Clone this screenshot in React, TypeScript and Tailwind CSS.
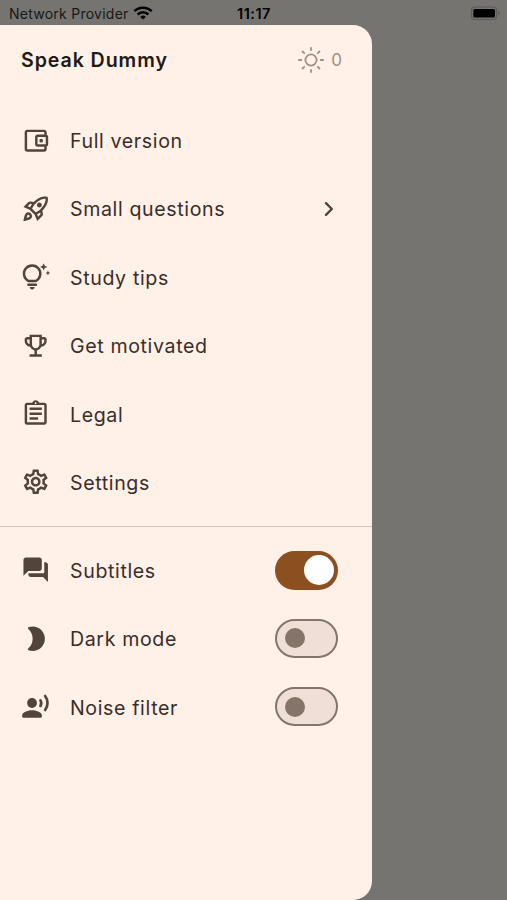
import type { ReactNode } from 'react';
import {
  MdOutlineAssignment,
  MdOutlineEmojiEvents,
  MdOutlineRocketLaunch,
  MdOutlineSettings,
} from 'react-icons/md';

function SunIcon() {
  return (
    <svg viewBox="0 0 28 28" className="w-7 h-7" fill="none" stroke="currentColor" strokeWidth="1.8" strokeLinecap="round">
      <circle cx="14" cy="14" r="5.6" />
      <path d="M14 2v2M14 24v2M1.900 14h2.400M23.700 14h2.400M5.500 5.500l1.700 1.700M20.800 20.800l1.700 1.700M22.500 5.500l-1.700 1.700M7.200 20.800l-1.700 1.700" />
    </svg>
  );
}

function WalletIcon() {
  return (
    <svg viewBox="0 0 24 24" width="1em" height="1em" fill="none" stroke="currentColor" strokeWidth="2" strokeLinejoin="round">
      <path d="M20 7.500V5.200c0-.7-.5-1.200-1.200-1.200H5.200C4.500 4 4 4.500 4 5.200v13.600c0 .7.500 1.200 1.200 1.200h13.600c.7 0 1.200-.5 1.200-1.200v-2.300" />
      <rect x="12.500" y="8" width="8.700" height="8" rx="1.200" />
      <circle cx="16.500" cy="12" r="1.500" fill="currentColor" stroke="none" />
    </svg>
  );
}

function TipsIcon() {
  return (
    <svg viewBox="0 0 24 24" width="1em" height="1em" fill="none" stroke="currentColor" strokeWidth="2" strokeLinecap="round" strokeLinejoin="round">
      <path d="M6 15.500h6.200a6.700 6.700 0 1 0-6.200 0z" />
      <path d="M6 18.500h6.200" />
      <path d="M7.100 20.500h4c0 1.100-.9 2-2 2s-2-.9-2-2z" fill="currentColor" stroke="none" />
      <path d="m18.500 1 .9 2.100 2.100.9-2.100.9-.9 2.100-.9-2.100-2.100-.9 2.100-.9zM22 7l.6 1.300 1.300.6-1.300.6-.6 1.300-.6-1.300-1.300-.6 1.300-.6z" fill="currentColor" stroke="none" />
    </svg>
  );
}

function ForumIcon() {
  return (
    <svg viewBox="0 0 24 24" width="1em" height="1em" fill="currentColor">
      <path d="M20 6h-1v8c0 .6-.4 1-1 1H6v1c0 1.100.9 2 2 2h10l4 4V8c0-1.100-.9-2-2-2zM17 11V4c0-1.100-.9-2-2-2H4c-1.100 0-2 .9-2 2v13l4-4h9c1.100 0 2-.9 2-2z" />
    </svg>
  );
}

function MoonIcon() {
  return (
    <svg viewBox="0 0 24 24" width="1em" height="1em" fill="currentColor">
      <path d="M9.500 2c-1.200 0-2.300.2-3.300.6-.7.300-.8 1-.2 1.500C8.200 6 9.500 8.800 9.500 12S8.200 18 6 19.900c-.6.5-.5 1.200.2 1.500 1 .4 2.100.6 3.300.6 5.520 0 10-4.480 10-10S15.020 2 9.500 2z" />
    </svg>
  );
}

function VoiceIcon() {
  return (
    <svg viewBox="0 0 24 24" width="1em" height="1em" fill="currentColor">
      <circle cx="9" cy="9" r="4" />
      <path d="M9 15c-2.670 0-8 1.340-8 4v1c0 .6.400 1 1 1h14c.6 0 1-.4 1-1v-1c0-2.660-5.330-4-8-4z" />
      <path d="M15.900 6.800a4.600 4.600 0 0 1 0 4.600M19.700 3.300a9.300 9.300 0 0 1 0 11.400" fill="none" stroke="currentColor" strokeWidth="2.200" strokeLinecap="round" />
    </svg>
  );
}

function WifiIcon() {
  return (
    <svg viewBox="0 0 20 14" className="w-5 h-3.5" fill="none" stroke="currentColor" strokeWidth="2.500">
      <path d="M1.300 5.200a12.400 12.400 0 0 1 17.400 0M4.600 8.500a7.600 7.600 0 0 1 10.800 0" />
      <path d="M10 13.600 7.200 10.900a4 4 0 0 1 5.600 0z" fill="currentColor" stroke="none" />
    </svg>
  );
}

function BatteryIcon() {
  return (
    <svg viewBox="0 0 32 16" className="w-8 h-4">
      <rect x="1.500" y="2" width="25" height="12.500" rx="3.500" fill="none" stroke="#5a5a57" strokeWidth="1.200" />
      <rect x="3.300" y="4" width="21.700" height="8.500" rx="1.500" fill="#000" />
      <path d="M28.300 6v4.500c1-.3 1.600-1.200 1.600-2.200s-.6-2-1.600-2.300z" fill="#5a5a57" />
    </svg>
  );
}

function ChevronIcon() {
  return (
    <svg viewBox="0 0 10 16" className="w-2.5 h-4" fill="none" stroke="currentColor" strokeWidth="2.400" strokeLinecap="round" strokeLinejoin="round">
      <path d="M2 2.200 7.800 8 2 13.800" />
    </svg>
  );
}

function Toggle({ on }: { on: boolean }) {
  if (on) {
    return (
      <div role="switch" aria-checked="true" className="flex items-center justify-end w-[63.500px] h-[39px] pr-[4.500px] rounded-full bg-[#8b4f20]">
        <div className="w-[30px] h-[30px] rounded-full bg-white" />
      </div>
    );
  }
  return (
    <div role="switch" aria-checked="false" className="flex items-center w-[63.500px] h-[39px] pl-2 rounded-full border-2 border-[#84746a] bg-[#f0dfd7]">
      <div className="w-5 h-5 rounded-full bg-[#84746a]" />
    </div>
  );
}

type RowProps = { icon: ReactNode; label: string; children?: ReactNode };

function Row({ icon, label, children }: RowProps) {
  return (
    <div className="flex items-center h-[68.400px] pl-[20.600px] pr-[34px]">
      <span className="shrink-0 text-[29.400px] text-[#52443c]">{icon}</span>
      <span className="ml-5 pt-[3px] flex-1 text-[19.600px] tracking-[0.620px] whitespace-nowrap text-[#3a2e28]">{label}</span>
      {children}
    </div>
  );
}

export default function App() {
  return (
    <div className="w-[507px] h-[900px] overflow-hidden bg-[#757471] font-['Inter','Liberation_Sans',sans-serif]">
      <header className="flex items-center h-[25px] pl-[9px] pr-[5px] text-black">
        <div className="flex items-center gap-1 w-[228px]">
          <span className="pt-0.5 text-[14px] tracking-[0.250px] whitespace-nowrap text-[#181818]">Network Provider</span>
          <WifiIcon />
        </div>
        <span className="pt-0.5 text-[14.500px] font-semibold tracking-[0.500px]">11:17</span>
        <div className="ml-auto">
          <BatteryIcon />
        </div>
      </header>

      <aside className="w-[372px] h-[875px] rounded-r-[19px] bg-[#fff0e8]">
        <div className="flex items-center justify-between h-[70px] pl-[21px] pr-[30px]">
          <h1 className="pt-0.5 text-[19.600px] font-semibold tracking-[0.920px] text-[#221a14]">Speak Dummy</h1>
          <div className="flex items-center gap-1.5 text-[#a09187]">
            <SunIcon />
            <span className="pt-px text-[17px]">0</span>
          </div>
        </div>

        <nav className="pt-[11px]">
          <Row icon={<WalletIcon />} label="Full version" />
          <Row icon={<MdOutlineRocketLaunch />} label="Small questions">
            <span className="mr-1 text-[#52443c]">
              <ChevronIcon />
            </span>
          </Row>
          <Row icon={<TipsIcon />} label="Study tips" />
          <Row icon={<MdOutlineEmojiEvents />} label="Get motivated" />
          <Row icon={<MdOutlineAssignment />} label="Legal" />
          <Row icon={<MdOutlineSettings />} label="Settings" />
        </nav>

        <div className="mt-[9.500px] mb-[9px] h-px bg-[#d3c5bd]" />

        <Row icon={<ForumIcon />} label="Subtitles">
          <Toggle on />
        </Row>
        <Row icon={<MoonIcon />} label="Dark mode">
          <Toggle on={false} />
        </Row>
        <Row icon={<VoiceIcon />} label="Noise filter">
          <Toggle on={false} />
        </Row>
      </aside>
    </div>
  );
}
